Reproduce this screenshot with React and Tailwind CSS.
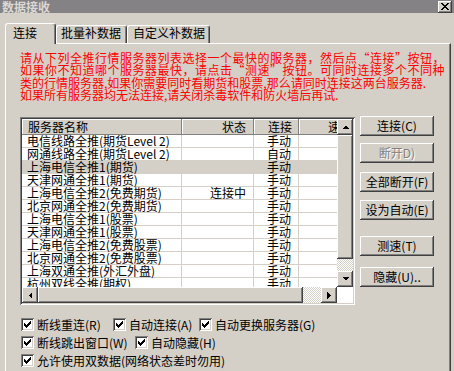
import React from "react";

const raised =
  "shadow-[inset_-1px_-1px_#404040,inset_1px_1px_#ffffff,inset_-2px_-2px_#808080,inset_2px_2px_#d4d0c8]";
const sunken =
  "shadow-[inset_1px_1px_#808080,inset_-1px_-1px_#ffffff,inset_2px_2px_#404040,inset_-2px_-2px_#d4d0c8]";

const servers = [
  ["电信线路全推(期货Level 2)", "", "手动"],
  ["网通线路全推(期货Level 2)", "", "自动"],
  ["上海电信全推1(期货)", "", "手动", true],
  ["天津网通全推1(期货)", "", "手动"],
  ["上海电信全推2(免费期货)", "连接中", "手动"],
  ["北京网通全推2(免费期货)", "", "手动"],
  ["上海电信全推1(股票)", "", "手动"],
  ["天津网通全推1(股票)", "", "手动"],
  ["上海电信全推2(免费股票)", "", "手动"],
  ["北京网通全推2(免费股票)", "", "手动"],
  ["上海双通全推(外汇外盘)", "", "手动"],
  ["杭州双线全推(期权)", "", "手动"],
];

const arrows = {
  up: { box: "0 0 7 4", w: 7, h: 4, pts: "0,4 7,4 3.5,0.5" },
  down: { box: "0 0 7 4", w: 7, h: 4, pts: "0,0 7,0 3.5,3.5" },
  left: { box: "0 0 4 7", w: 4, h: 7, pts: "4,0 4,7 0.5,3.5" },
  right: { box: "0 0 4 7", w: 4, h: 7, pts: "0,0 0,7 3.5,3.5" },
};

function ScrollButton({ dir }) {
  const a = arrows[dir];
  return (
    <div className={`w-[16px] h-[16px] shrink-0 bg-[#d4d0c8] flex items-center justify-center ${raised}`}>
      <svg width={a.w} height={a.h} viewBox={a.box} shapeRendering="crispEdges">
        <polygon points={a.pts} fill="#000" />
      </svg>
    </div>
  );
}

function CheckBox({ label, width }) {
  const cols = [2, 3, 4, 3, 2, 1, 0];
  return (
    <div className="flex items-center" style={width ? { width } : undefined}>
      <div className={`w-[13px] h-[13px] bg-white shrink-0 ${sunken}`}>
        <svg width="13" height="13" viewBox="0 0 13 13" shapeRendering="crispEdges">
          {cols.map((y, i) => (
            <rect key={i} x={3 + i} y={3 + y} width="1" height="3" fill="#000" />
          ))}
        </svg>
      </div>
      <span className="ml-[3px] whitespace-nowrap text-[12px] leading-[13px]">{label}</span>
    </div>
  );
}

function DlgButton({ children, disabled, className = "" }) {
  return (
    <div
      className={`h-[20px] w-[74px] bg-[#d4d0c8] flex items-center justify-center text-[12px] leading-[12px] ${raised} ${
        disabled ? "text-[#808080] [text-shadow:1px_1px_0_#ffffff]" : "text-black"
      } ${className}`}
    >
      {children}
    </div>
  );
}

export default function App() {
  return (
    <div className="w-[454px] h-[371px] overflow-hidden bg-[#d4d0c8] font-['Noto_Sans_CJK_SC',sans-serif] text-black">
      {/* title bar */}
      <div className="h-[13px] bg-[#848284] flex items-center justify-between">
        <span className="pl-[2px] text-[12px] leading-[13px] font-bold text-[#dcd8d4]">数据接收</span>
        <div className={`mr-[2px] w-[14px] h-[12px] bg-[#d4d0c8] flex items-center justify-center ${raised}`}>
          <svg width="8" height="7" viewBox="0 0 8 7" shapeRendering="crispEdges">
            <path d="M0 0h2l2 2.5L6 0h2L5 3.5 8 7H6L4 4.5 2 7H0l3-3.5z" fill="#000" />
          </svg>
        </div>
      </div>

      <div className="pt-[10px]">
        {/* tabs */}
        <div className="relative z-10 ml-[5px] h-[20px] flex items-end text-[12px] leading-[12px]">
          <div className="w-[51px] h-[21px] -mb-px bg-[#d4d0c8] border-t border-l border-r border-t-white border-l-white border-r-[#404040] rounded-t-[3px] shadow-[inset_-1px_0_#808080] pl-[7px] pt-[3px]">
            连接
          </div>
          <div className="w-[71px] h-[18px] bg-[#d4d0c8] border-t border-l border-r border-t-white border-l-white border-r-[#404040] rounded-t-[3px] shadow-[inset_-1px_0_#808080] pl-[4px] pt-[1px]">
            批量补数据
          </div>
          <div className="w-[83px] h-[18px] bg-[#d4d0c8] border-t border-l border-r border-t-white border-l-white border-r-[#404040] rounded-t-[3px] shadow-[inset_-1px_0_#808080] pl-[5px] pt-[1px]">
            自定义补数据
          </div>
        </div>

        {/* tab page */}
        <div className="ml-[5px] w-[446px] h-[328px] border-t border-l border-r border-t-white border-l-white border-r-[#404040] shadow-[inset_-1px_0_#808080] pl-[14px] pt-[8px]">
          <div className="text-[#ff0000] text-[12px] leading-[12.3px] whitespace-nowrap">
            <div className="tracking-[0.5px]">请从下列全推行情服务器列表选择一个最快的服务器，然后点“连接”按钮，</div>
            <div className="tracking-[0.5px]">如果你不知道哪个服务器最快，请点击“测速”按钮。可同时连接多个不同种</div>
            <div>类的行情服务器,如果你需要同时看期货和股票,那么请同时连接这两台服务器.</div>
            <div>如果所有服务器均无法连接,请关闭杀毒软件和防火墙后再试.</div>
          </div>

          <div className="mt-[16px] flex gap-[5px]">
            {/* server list */}
            <div className={`w-[335px] h-[188px] bg-white p-[2px] flex flex-col ${sunken}`}>
              <div className="flex h-[168px]">
                <div className="w-[315px] h-[168px] overflow-hidden text-[12px] leading-[12px]">
                  <div className="flex h-[16px] w-[400px]">
                    <div className="w-[160px] shrink-0 bg-[#d4d0c8] flex items-center pl-[6px] shadow-[inset_-1px_-1px_#808080,inset_1px_1px_#ffffff]">
                      服务器名称
                    </div>
                    <div className="w-[72px] shrink-0 bg-[#d4d0c8] flex items-center justify-end pr-[8px] shadow-[inset_-1px_-1px_#808080,inset_1px_1px_#ffffff]">
                      状态
                    </div>
                    <div className="w-[45px] shrink-0 bg-[#d4d0c8] flex items-center pl-[14px] shadow-[inset_-1px_-1px_#808080,inset_1px_1px_#ffffff]">
                      连接
                    </div>
                    <div className="w-[80px] shrink-0 bg-[#d4d0c8] flex items-center pl-[29px] shadow-[inset_-1px_-1px_#808080,inset_1px_1px_#ffffff]">
                      速度
                    </div>
                  </div>
                  {servers.map(([name, status, mode, selected]) => (
                    <div
                      key={name}
                      className={`flex h-[13px] w-[400px] whitespace-nowrap ${
                        selected ? "bg-[#d4d0c8]" : "bg-white"
                      }`}
                    >
                      <div className="w-[160px] shrink-0 border-r border-b border-[#d4d0c8] pl-[5px]">{name}</div>
                      <div className="w-[72px] shrink-0 border-r border-b border-[#d4d0c8] text-right pr-[7px]">
                        {status}
                      </div>
                      <div className="w-[45px] shrink-0 border-r border-b border-[#d4d0c8] pl-[13px]">{mode}</div>
                      <div className="w-[80px] shrink-0 border-b border-[#d4d0c8]"></div>
                    </div>
                  ))}
                </div>
                {/* vertical scrollbar */}
                <div className="w-[16px] flex flex-col">
                  <ScrollButton dir="up" />
                  <div className={`h-[124px] bg-[#d4d0c8] ${raised}`} />
                  <div className="h-[12px] bg-[repeating-conic-gradient(#ffffff_0%_25%,#d4d0c8_0%_50%)] bg-[length:2px_2px]" />
                  <ScrollButton dir="down" />
                </div>
              </div>
              {/* horizontal scrollbar */}
              <div className="flex h-[16px]">
                <ScrollButton dir="left" />
                <div className={`w-[265px] bg-[#d4d0c8] ${raised}`} />
                <div className="w-[18px] bg-[repeating-conic-gradient(#ffffff_0%_25%,#d4d0c8_0%_50%)] bg-[length:2px_2px]" />
                <ScrollButton dir="right" />
                <div className="w-[16px] bg-white" />
              </div>
            </div>

            {/* buttons */}
            <div className="-mt-px flex flex-col">
              <DlgButton>连接(C)</DlgButton>
              <DlgButton disabled className="mt-[7px]">断开D)</DlgButton>
              <DlgButton className="mt-[9px]">全部断开(F)</DlgButton>
              <DlgButton className="mt-[8px]">设为自动(E)</DlgButton>
              <DlgButton className="mt-[16px]">测速(T)</DlgButton>
              <DlgButton className="mt-[11px]">隐藏(U)..</DlgButton>
            </div>
          </div>

          {/* options */}
          <div className="mt-[10px] ml-[1px] flex flex-col">
            <div className="h-[18px] flex items-center">
              <CheckBox label="断线重连(R)" width={92} />
              <CheckBox label="自动连接(A)" width={86} />
              <CheckBox label="自动更换服务器(G)" />
            </div>
            <div className="h-[18px] flex items-center">
              <CheckBox label="断线跳出窗口(W)" width={114} />
              <CheckBox label="自动隐藏(H)" />
            </div>
            <div className="h-[18px] flex items-center">
              <CheckBox label="允许使用双数据(网络状态差时勿用)" />
            </div>
          </div>
        </div>
      </div>
    </div>
  );
}
